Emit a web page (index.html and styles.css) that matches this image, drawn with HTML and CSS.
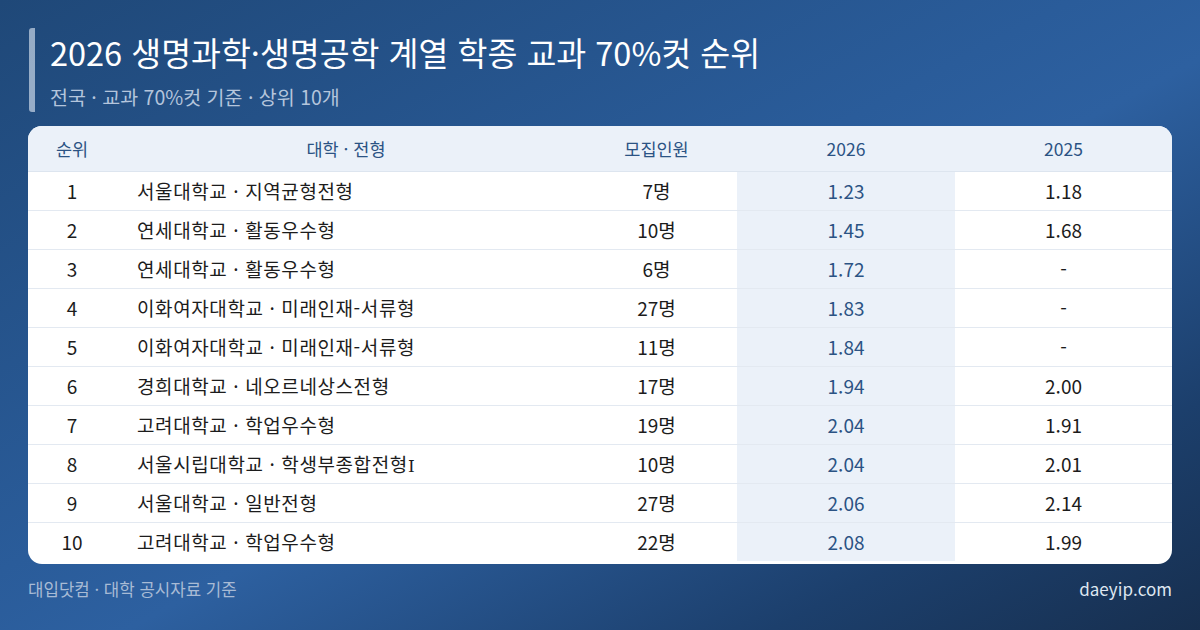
FILE: index.html
```html
<!DOCTYPE html>
<html lang="ko">
<head>
<meta charset="utf-8">
<link rel="stylesheet" href="styles.css">
</head>
<body>
<div class="page">
  <header class="head">
    <h1 class="title">2026 생명과학·생명공학 계열 학종 교과 70%컷 순위</h1>
    <p class="sub">전국 · 교과 70%컷 기준 · 상위 10개</p>
  </header>
  <div class="card">
    <table class="tbl">
      <colgroup>
        <col class="c-rank"><col class="c-name"><col class="c-cnt"><col class="c-y26"><col class="c-y25">
      </colgroup>
      <thead>
        <tr><th>순위</th><th>대학 · 전형</th><th>모집인원</th><th>2026</th><th>2025</th></tr>
      </thead>
      <tbody>
        <tr><td>1</td><td class="name">서울대학교 · 지역균형전형</td><td>7명</td><td class="hl">1.23</td><td>1.18</td></tr>
        <tr><td>2</td><td class="name">연세대학교 · 활동우수형</td><td>10명</td><td class="hl">1.45</td><td>1.68</td></tr>
        <tr><td>3</td><td class="name">연세대학교 · 활동우수형</td><td>6명</td><td class="hl">1.72</td><td>-</td></tr>
        <tr><td>4</td><td class="name">이화여자대학교 · 미래인재-서류형</td><td>27명</td><td class="hl">1.83</td><td>-</td></tr>
        <tr><td>5</td><td class="name">이화여자대학교 · 미래인재-서류형</td><td>11명</td><td class="hl">1.84</td><td>-</td></tr>
        <tr><td>6</td><td class="name">경희대학교 · 네오르네상스전형</td><td>17명</td><td class="hl">1.94</td><td>2.00</td></tr>
        <tr><td>7</td><td class="name">고려대학교 · 학업우수형</td><td>19명</td><td class="hl">2.04</td><td>1.91</td></tr>
        <tr><td>8</td><td class="name">서울시립대학교 · 학생부종합전형<span class="roman">I</span></td><td>10명</td><td class="hl">2.04</td><td>2.01</td></tr>
        <tr><td>9</td><td class="name">서울대학교 · 일반전형</td><td>27명</td><td class="hl">2.06</td><td>2.14</td></tr>
        <tr><td>10</td><td class="name">고려대학교 · 학업우수형</td><td>22명</td><td class="hl">2.08</td><td>1.99</td></tr>
      </tbody>
    </table>
  </div>
  <footer class="foot">
    <span class="src">대입닷컴 · 대학 공시자료 기준</span>
    <span class="site">daeyip.com</span>
  </footer>
</div>
</body>
</html>
```

FILE: styles.css
```css
* { box-sizing: border-box; margin: 0; padding: 0; }
html, body { width: 1200px; height: 630px; overflow: hidden; }
body {
  font-family: "Noto Sans CJK KR", "Noto Sans", sans-serif;
  background: linear-gradient(152deg, #1f4878 0%, #2a5c9a 45%, #2d60a0 55%, #1c3f6c 82%, #172f4f 100%);
  color: #1c1c1c;
}
.page {
  padding: 28px 28px 0 28px;
  display: flex;
  flex-direction: column;
}
.head {
  border-left: 6px solid rgba(230, 238, 248, 0.6);
  border-radius: 3px;
  padding: 0 0 2px 15px;
  margin-left: 1px;
}
.title {
  font-size: 32.5px;
  font-weight: 400;
  line-height: 48px;
  color: #ffffff;
}
.sub {
  margin-top: 8px;
  font-size: 19.5px;
  line-height: 26px;
  color: #b4c5dc;
}
.card {
  margin-top: 14px;
  background: #ffffff;
  border-radius: 14px;
  overflow: hidden;
  padding-bottom: 3px;
}
.tbl {
  width: 100%;
  border-collapse: collapse;
  table-layout: fixed;
}
.c-rank { width: 88px; }
.c-name { width: 460px; }
.c-cnt { width: 161px; }
.c-y26 { width: 218px; }
.c-y25 { width: 217px; }
.tbl thead th {
  background: #ebf1f9;
  height: 45px;
  font-weight: 400;
  font-size: 17.5px;
  color: #2b5384;
  text-align: center;
  border-bottom: 1px solid #dde5ef;
}
.tbl tbody td {
  height: 39px;
  font-size: 19px;
  text-align: center;
  border-top: 1px solid #e3e9f1;
  color: #1c1c1c;
}
.tbl tbody tr:first-child td { border-top: none; }
.tbl tbody td.name {
  text-align: left;
  padding-left: 21px;
  letter-spacing: 0.6px;
}
.tbl tbody td.hl {
  background: #ebf1f9;
  color: #2b5384;
}
.roman { font-family: "DejaVu Serif", serif; font-size: 17px; }
.foot {
  margin-top: 14px;
  display: flex;
  justify-content: space-between;
  font-size: 16.8px;
  line-height: 22px;
}
.src { color: #a8bbd5; }
.site { color: #dfe7f1; font-size: 17px; }
```
